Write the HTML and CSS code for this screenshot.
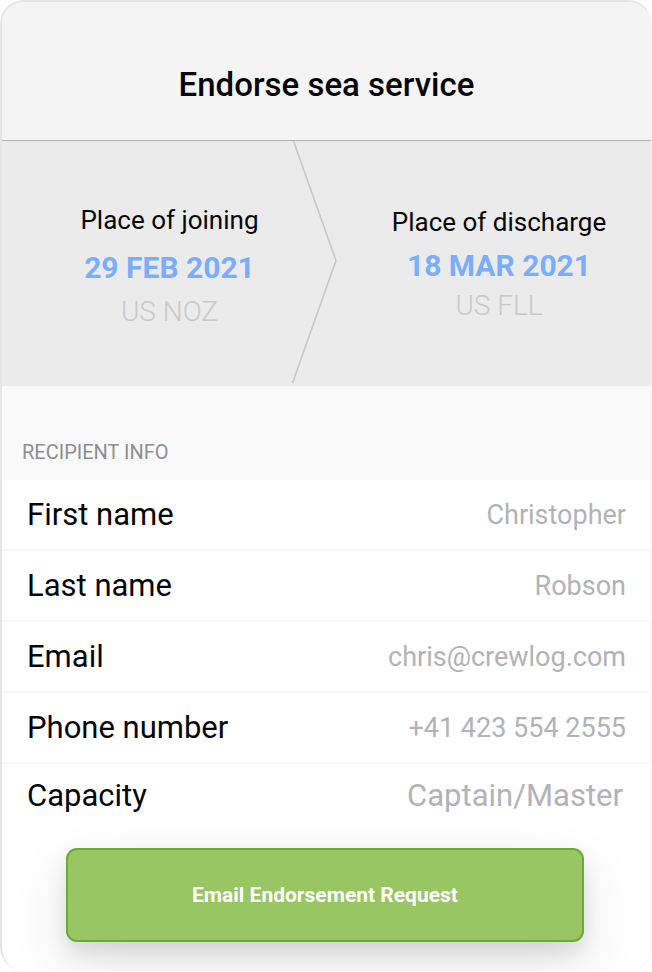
FILE: index.html
```html
<!DOCTYPE html>
<html lang="en">
<head>
<meta charset="utf-8">
<meta name="viewport" content="width=device-width, initial-scale=1">
<title>Endorse sea service</title>
<link rel="stylesheet" href="styles.css">
</head>
<body>
<main class="card">
  <header class="header">
    <h1 class="title">Endorse sea service</h1>
  </header>

  <section class="voyage">
    <div class="leg leg-joining">
      <h2 class="leg-label">Place of joining</h2>
      <time class="leg-date">29 FEB 2021</time>
      <p class="leg-port">US NOZ</p>
    </div>
    <svg class="chevron" viewBox="0 0 46 245" fill="none" stroke="#c8c8c9" stroke-width="1.6" aria-hidden="true">
      <path d="M2.500 0L45 119.500L1.500 242"/>
    </svg>
    <div class="leg leg-discharge">
      <h2 class="leg-label">Place of discharge</h2>
      <time class="leg-date">18 MAR 2021</time>
      <p class="leg-port">US FLL</p>
    </div>
  </section>

  <form class="form">
    <h2 class="section-title">RECIPIENT INFO</h2>
    <div class="row">
      <label for="first-name">First name</label>
      <input id="first-name" type="text" value="Christopher">
    </div>
    <div class="row">
      <label for="last-name">Last name</label>
      <input id="last-name" type="text" value="Robson">
    </div>
    <div class="row">
      <label for="email">Email</label>
      <input id="email" type="email" value="chris@crewlog.com">
    </div>
    <div class="row">
      <label for="phone">Phone number</label>
      <input id="phone" type="tel" value="+41 423 554 2555">
    </div>
    <div class="row row-capacity">
      <label for="capacity">Capacity</label>
      <input id="capacity" type="text" value="Captain/Master">
    </div>
    <div class="actions">
      <button class="submit" type="button">Email Endorsement Request</button>
    </div>
  </form>
</main>
</body>
</html>
```
FILE: styles.css
```css
* {
  box-sizing: border-box;
}

body {
  margin: 0;
  background: #fff;
  color: #050505;
  font-family: Roboto, "Liberation Sans", sans-serif;
}

h1,
h2,
p {
  margin: 0;
}

.card {
  overflow: hidden;
  border: solid #e5e5e5;
  border-width: 2px 1px 0 2px;
  border-right-color: #f4f4f4;
  border-radius: 24px;
  background: #fff;
}

.header {
  padding: 62px 24px 35px;
  border-bottom: 1px solid #b2b2b2;
  background: #f4f4f4;
  text-align: center;
}

.title {
  font-size: 33px;
  font-weight: 500;
  line-height: 41px;
}

.voyage {
  display: grid;
  grid-template-columns: 335fr 314fr;
  align-items: center;
  background: #ebebeb;
}

.chevron {
  grid-area: 1 / 1;
  justify-self: end;
  width: 46px;
  height: 245px;
}

.leg {
  display: flex;
  flex-direction: column;
  align-items: center;
}

.leg-joining {
  grid-area: 1 / 1;
  gap: 14px;
}

.leg-discharge {
  grid-area: 1 / 2;
  gap: 10px;
  padding: 0 0 3px 10px;
}

.leg-label {
  font-size: 26px;
  font-weight: 400;
  line-height: 36px;
}

.leg-date {
  color: #7aadfc;
  font-size: 30px;
  font-weight: 700;
  line-height: 32px;
}

.leg-port {
  color: #c9c9cb;
  font-size: 28px;
  font-weight: 300;
  line-height: 28px;
}

.section-title {
  padding: 52px 20px 14px;
  background: #f9f9f9;
  color: #8e8e92;
  font-size: 20px;
  font-weight: 400;
  line-height: 28px;
}

.row {
  display: flex;
  align-items: center;
  justify-content: space-between;
  gap: 16px;
  height: 71px;
  padding: 0 25px;
  border-bottom: 2px solid #f8f8f8;
}

.row label {
  flex: none;
  font-size: 31px;
  line-height: 36px;
}

.row input {
  flex: 1;
  min-width: 0;
  padding: 0;
  border: 0;
  outline: 0;
  background: none;
  color: #b2b2b8;
  font-family: inherit;
  font-size: 27px;
  line-height: 36px;
  text-align: right;
}

.row-capacity {
  height: 64px;
  border-bottom: 0;
}

.row-capacity input {
  padding-right: 3px;
  font-size: 31px;
}

.actions {
  padding: 20px 67px 29px 64px;
}

.submit {
  display: block;
  width: 100%;
  padding: 31px 16px;
  border: 2px solid #69ab35;
  border-radius: 11px;
  background: #97c663;
  box-shadow: 0 10px 20px rgba(0, 0, 0, 0.1), 0 24px 60px rgba(0, 0, 0, 0.1);
  color: #fff;
  font-family: inherit;
  font-size: 21px;
  font-weight: 700;
  line-height: 28px;
}
```
